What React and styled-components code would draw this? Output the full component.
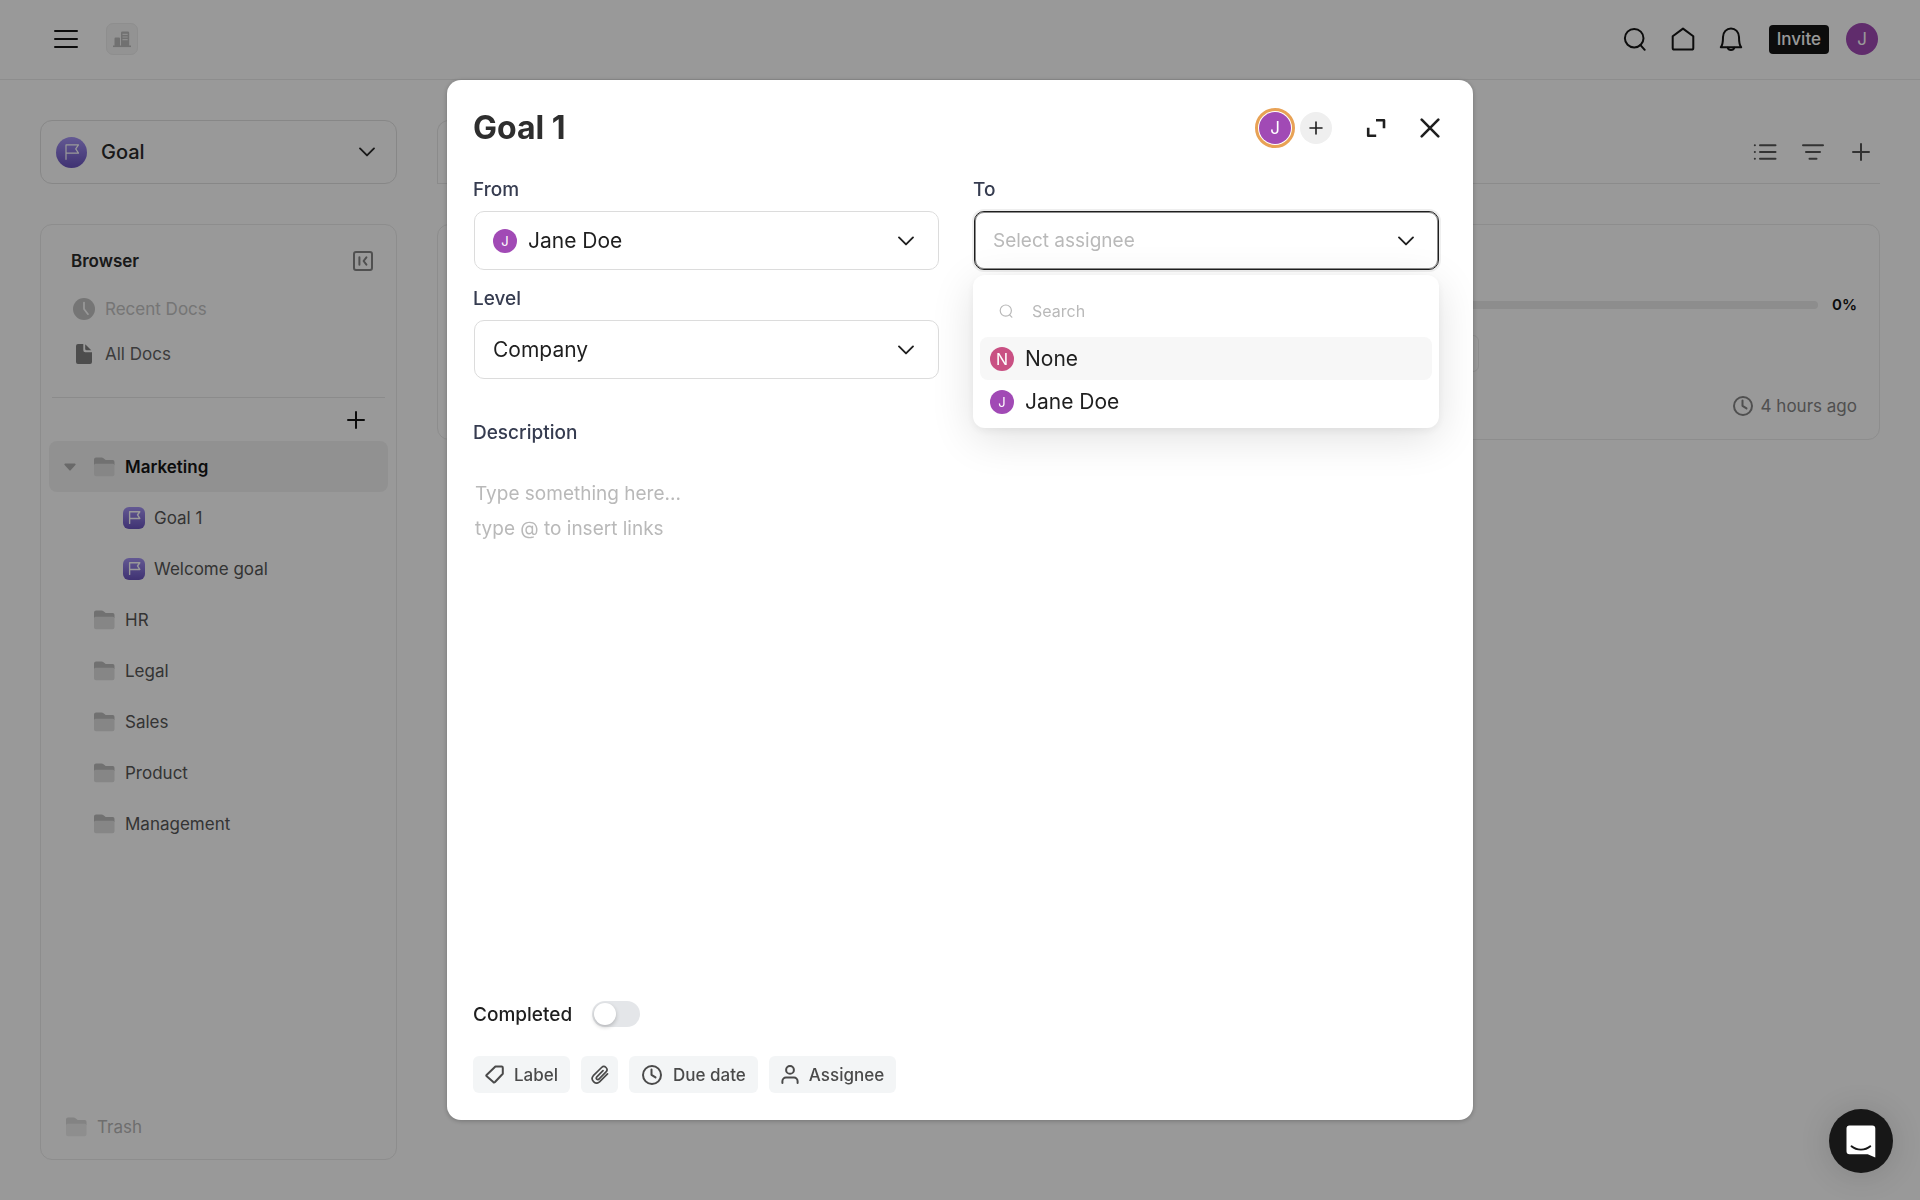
import React from "react";
import styled, { createGlobalStyle } from "styled-components";

const GlobalStyle = createGlobalStyle`
  *, *::before, *::after {
    box-sizing: border-box;
  }
  html, body, #root {
    height: 100%;
  }
  body {
    margin: 0;
    background: #fff;
    color: #1f1f1f;
    font-family: Inter, "Liberation Sans", sans-serif;
    font-size: 18px;
  }
  button, input, select, textarea {
    font: inherit;
    color: inherit;
    margin: 0;
  }
`;

/* ---------- icons ---------- */

const Icon = ({ w, h = w, stroke = 2, children }) => (
  <svg
    width={w}
    height={h}
    viewBox={`0 0 ${w} ${h}`}
    fill="none"
    stroke="currentColor"
    strokeWidth={stroke}
    strokeLinecap="round"
    strokeLinejoin="round"
    aria-hidden="true"
  >
    {children}
  </svg>
);

const ChevronIcon = () => (
  <Icon w={18} h={10} stroke={1.9}>
    <path d="M2 1.4l7 7 7-7" />
  </Icon>
);

const MenuIcon = () => (
  <Icon w={24} h={20}>
    <path d="M1 2h22M1 10h22M1 18h22" />
  </Icon>
);

const BuildingIcon = () => (
  <svg width="18" height="17" viewBox="0 0 18 17" aria-hidden="true">
    <g fill="#bdbdbd">
      <path d="M0 14.5h18v1.6H0z" />
      <path d="M1.5 7.5a1 1 0 0 1 1-1H6a1 1 0 0 1 1 1V15H1.5z" />
      <path d="M8 2A1.4 1.4 0 0 1 9.4.6h5.4A1.4 1.4 0 0 1 16.2 2v13H8z" />
    </g>
    <path
      d="M9.5 3.3h5.2M9.5 6h5.2M9.5 8.7h5.2"
      stroke="#ededed"
      strokeWidth="1.2"
    />
  </svg>
);

const SearchIcon = () => (
  <Icon w={24}>
    <circle cx="11.2" cy="11.2" r="9.3" />
    <path d="M17.3 17.9l4.4 4.9" />
  </Icon>
);

const SmallSearchIcon = () => (
  <Icon w={14} stroke={1.2}>
    <circle cx="6.8" cy="6.6" r="5.6" />
    <path d="M10.6 10.8l2.2 2.4" />
  </Icon>
);

const HomeIcon = () => (
  <Icon w={24}>
    <path d="M12 1.6L1.7 9.3V21a1.6 1.6 0 0 0 1.6 1.6h17.4a1.6 1.6 0 0 0 1.6-1.6V9.3z" />
  </Icon>
);

const BellIcon = () => (
  <Icon w={24}>
    <path d="M1.8 20.2c1.7-1.8 2.2-4 2.2-10.2a8 8.6 0 0 1 16 0c0 6.2.5 8.4 2.2 10.2z" />
    <path d="M8.7 20.8a3.4 2.8 0 0 0 6.6 0" />
  </Icon>
);

const PlusIcon = ({ size = 18, stroke = 2 }) => (
  <Icon w={size} stroke={stroke}>
    <path d={`M${size / 2} 1v${size - 2}M1 ${size / 2}h${size - 2}`} />
  </Icon>
);

const ListIcon = () => (
  <Icon w={24} h={18}>
    <path d="M1.8 2.3h.1M1.8 9h.1M1.8 15.7h.1M7 2.3h15.5M7 9h15.5M7 15.7h15.5" />
  </Icon>
);

const FilterIcon = () => (
  <Icon w={24} h={18}>
    <path d="M2 2.3h20M5 9h14M8.5 15.7h7" />
  </Icon>
);

const FlagIcon = ({ size = 16, stroke = 1.2 }) => (
  <svg
    width={size}
    height={size}
    viewBox="0 0 16 16"
    fill="none"
    stroke="#fff"
    strokeWidth={stroke}
    strokeLinejoin="round"
    strokeLinecap="round"
    aria-hidden="true"
  >
    <path d="M2 15.3V.9h12.5l-2.8 4 2.8 4.3H2" />
  </svg>
);

const CollapseIcon = () => (
  <Icon w={20}>
    <rect x="1" y="1" width="18" height="18" rx="2" />
    <path d="M6.4 6.3v7.4M13.4 6.3L10.6 10l2.8 3.7" />
  </Icon>
);

const ClockSolidIcon = () => (
  <svg width="22" height="22" viewBox="0 0 22 22" aria-hidden="true">
    <circle cx="11" cy="11" r="11" fill="currentColor" />
    <path
      d="M11 4.6V11l4 5.2"
      fill="none"
      stroke="#fff"
      strokeWidth="1.7"
      strokeLinecap="round"
    />
  </svg>
);

const ClockIcon = () => (
  <Icon w={22}>
    <circle cx="11" cy="11" r="9" />
    <path d="M10.5 5.5v5.3l4 2.6" />
  </Icon>
);

const DocIcon = () => (
  <svg width="22" height="22" viewBox="0 0 22 22" aria-hidden="true">
    <path
      d="M3 3a2 2 0 0 1 2-2h5.3v6.2a2 2 0 0 0 2 2H19V19a2 2 0 0 1-2 2H5a2 2 0 0 1-2-2z"
      fill="currentColor"
    />
    <path
      d="M12.2 1.3v4.5a1.5 1.5 0 0 0 1.5 1.5h4.6z"
      fill="currentColor"
    />
  </svg>
);

const FolderIcon = () => (
  <svg width="21" height="20" viewBox="0 0 21 20" aria-hidden="true">
    <path
      d="M0 2.5A2 2 0 0 1 2 .5h5.6a3 3 0 0 1 1.9.7l2.2 1.9h7A1.8 1.8 0 0 1 20.5 5v3H0z"
      fill="#bdbdbd"
    />
    <path
      d="M0 8.3a1.5 1.5 0 0 1 1.5-1.5H19a1.5 1.5 0 0 1 1.5 1.5v9a2 2 0 0 1-2 2H2a2 2 0 0 1-2-2z"
      fill="#dfdfdf"
    />
  </svg>
);

const CaretIcon = () => (
  <svg width="12" height="8" viewBox="0 0 12 8" aria-hidden="true">
    <path
      d="M1.3.5h9.4a.9.9 0 0 1 .7 1.5L6.9 7a1.2 1.2 0 0 1-1.8 0L.6 2A.9.9 0 0 1 1.3.5z"
      fill="#b0b0b0"
    />
  </svg>
);

const ExpandIcon = () => (
  <svg
    width="20"
    height="20"
    viewBox="0 0 20 20"
    fill="none"
    stroke="currentColor"
    strokeWidth="2.6"
    strokeLinejoin="round"
    aria-hidden="true"
  >
    <path d="M10 2.2h8v8M2.2 9.8v8h8" />
  </svg>
);

const CloseIcon = () => (
  <Icon w={20} stroke={2.6}>
    <path d="M1.7 1.7l16.6 16.6M18.3 1.7L1.7 18.3" />
  </Icon>
);

const TagIcon = () => (
  <Icon w={19}>
    <path d="M10.4 1.6h6.2a1.2 1.2 0 0 1 1.2 1.2v5.9L10 17a1.3 1.3 0 0 1-1.7.1L1.7 11.3a1 1 0 0 1-.1-1.4z" />
  </Icon>
);

const ClipIcon = () => (
  <Icon w={19} stroke={1.7}>
    <path d="M13 5.7l-6.4 6.5a1.5 1.5 0 0 0 2.1 2.1l7.3-7.4a3.1 3.1 0 0 0-4.4-4.4L3.3 10.7a4.4 4.4 0 0 0 6.2 6.2l8-8" />
  </Icon>
);

const PersonIcon = () => (
  <Icon w={18} h={19}>
    <circle cx="9" cy="4.9" r="3.9" />
    <path d="M1.4 18v-1.8a3.6 3.6 0 0 1 3.6-3.6h8a3.6 3.6 0 0 1 3.6 3.6V18" />
  </Icon>
);

const ChatIcon = () => (
  <svg width="30" height="33" viewBox="0 0 30 33" aria-hidden="true">
    <path
      d="M3.5.5h22.8a3 3 0 0 1 3 3v29l-7.6-3.3H3.5a3 3 0 0 1-3-3V3.5a3 3 0 0 1 3-3z"
      fill="#fff"
    />
    <path
      d="M5.5 21.3c5.2 4.4 13.6 4.4 18.8 0"
      fill="none"
      stroke="#171717"
      strokeWidth="1.9"
      strokeLinecap="round"
    />
  </svg>
);

/* ---------- shared parts ---------- */

const IconButton = styled.button`
  display: flex;
  align-items: center;
  justify-content: center;
  width: ${(p) => p.$size || 24}px;
  height: ${(p) => p.$size || 24}px;
  padding: 0;
  border: 0;
  background: none;
  cursor: pointer;
`;

const Avatar = styled.span`
  display: flex;
  flex: none;
  align-items: center;
  justify-content: center;
  width: ${(p) => p.$size}px;
  height: ${(p) => p.$size}px;
  border-radius: 50%;
  background: ${(p) => p.$color || "#a14ab5"};
  color: #fff;
  font-size: ${(p) => p.$font}px;
`;

const GoalBadge = styled.span`
  display: flex;
  flex: none;
  align-items: center;
  justify-content: center;
  width: ${(p) => p.$size}px;
  height: ${(p) => p.$size}px;
  border-radius: ${(p) => p.$radius};
  background: linear-gradient(#a594f5, #6a54bf);
`;

const SelectBox = styled.div`
  display: flex;
  align-items: center;
  position: relative;
`;

// the native arrow is hidden, so the chevron sits over the select's right end
const SelectInput = styled.select`
  flex: 1;
  min-width: 0;
  height: 100%;
  border: 0;
  outline: 0;
  background: none;
  appearance: none;
  cursor: pointer;
`;

const Arrow = styled.span`
  display: flex;
  position: absolute;
  right: ${(p) => p.$right}px;
  pointer-events: none;
`;

/* ---------- page ---------- */

const Page = styled.div`
  display: flex;
  flex-direction: column;
  min-height: 100vh;
`;

const Header = styled.header`
  display: flex;
  align-items: center;
  justify-content: space-between;
  height: 80px;
  padding: 0 42px 1px 54px;
  border-bottom: 1px solid #ebebeb;
`;

const HeaderGroup = styled.div`
  display: flex;
  align-items: center;
  gap: ${(p) => p.$gap}px;
  color: #151515;
`;

const OrgButton = styled.button`
  display: flex;
  align-items: center;
  justify-content: center;
  width: 32px;
  height: 32px;
  padding: 0;
  border: 1px solid #ededed;
  border-radius: 7px;
  background: #f5f5f5;
`;

const InviteButton = styled.button`
  height: 29px;
  margin-left: 2px;
  padding: 0 8px;
  border: 0;
  border-radius: 4px;
  background: #151515;
  color: #fff;
  font-size: 17px;
  font-weight: 500;
  line-height: 29px;
`;

const HeaderAvatar = styled.button`
  margin-left: -7px;
  padding: 0;
  border: 0;
  background: none;
`;

const Body = styled.div`
  display: flex;
  flex: 1;
  gap: 40px;
  padding: 40px;
`;

const Sidebar = styled.aside`
  display: flex;
  flex: none;
  flex-direction: column;
  gap: 40px;
  width: 357px;
`;

const TypePicker = styled(SelectBox)`
  height: 64px;
  padding-left: 15px;
  gap: 14px;
  border: 1px solid #e2e2e2;
  border-radius: 12px;
  color: #2a2a2a;
  font-size: 20px;
  font-weight: 500;
`;

const Panel = styled.section`
  display: flex;
  flex: 1;
  flex-direction: column;
  padding: 0 8px 12px;
  border: 1px solid #ebebeb;
  border-radius: 12px;
`;

const PanelHead = styled.div`
  display: flex;
  align-items: center;
  justify-content: space-between;
  height: 61px;
  padding: 11px 15px 0 22px;
  color: #868686;

  h2 {
    margin: 0;
    color: #2a2a2a;
    font-size: 17px;
    font-weight: 600;
  }
`;

const DocLink = styled.a`
  display: flex;
  align-items: center;
  height: 45px;
  padding-left: 24px;
  gap: 10px;
  color: ${(p) => (p.$muted ? "#c4c4c4" : "#646464")};
  font-size: 17px;
  text-decoration: none;

  svg {
    color: ${(p) => (p.$muted ? "#c4c4c4" : "#808080")};
  }
`;

const Divider = styled.hr`
  align-self: stretch;
  height: 1px;
  margin: 21px 3px 0;
  border: 0;
  background: #e8e8e8;
`;

const AddRow = styled.div`
  display: flex;
  justify-content: flex-end;
  padding: 10px 20px 9px;
  color: #151515;
`;

const Tree = styled.ul`
  display: flex;
  flex-direction: column;
  margin: 0;
  padding: 0;
  list-style: none;
`;

const TreeItem = styled.a`
  display: flex;
  align-items: center;
  height: 51px;
  padding-left: ${(p) => (p.$nested ? 74 : 15)}px;
  gap: ${(p) => (p.$nested ? 9 : 10)}px;
  border-radius: 8px;
  background: ${(p) => (p.$active ? "#f2f2f2" : "none")};
  color: ${(p) => (p.$active ? "#151515" : "#575757")};
  font-size: 17px;
  font-weight: ${(p) => (p.$active ? 600 : 400)};
  text-decoration: none;
`;

const CaretSlot = styled.span`
  display: flex;
  width: 20px;
`;

const TrashLink = styled.a`
  display: flex;
  align-items: center;
  height: 40px;
  margin-top: auto;
  padding-left: 17px;
  gap: 10px;
  color: #7d7d7d;
  font-size: 17px;
  text-decoration: none;
  opacity: 0.55;
`;

const Main = styled.main`
  flex: 1;
  min-width: 0;
`;

const TabBar = styled.div`
  display: flex;
  align-items: center;
  justify-content: space-between;
  height: 64px;
  padding-right: 7px;
  border-bottom: 1px solid #e8e8e8;
`;

const Tab = styled.div`
  align-self: stretch;
  width: 200px;
  border: 1px solid #e8e8e8;
  border-bottom: 0;
  border-radius: 12px 12px 0 0;
`;

const Tools = styled.div`
  display: flex;
  gap: 24px;
  color: #555;
`;

const GoalCard = styled.article`
  display: flex;
  flex-direction: column;
  height: 216px;
  margin-top: 40px;
  padding: 70px 22px 22px;
  border: 1px solid #ebebeb;
  border-radius: 12px;
`;

const ProgressRow = styled.div`
  display: flex;
  align-items: center;
  gap: 14px;
  font-size: 15px;
  font-weight: 600;
  line-height: 20px;
  color: #151515;
`;

const Track = styled.div`
  flex: 1;
  height: 8px;
  border-radius: 4px;
  background: #ebebeb;
`;

const Chip = styled.div`
  width: 1019px;
  height: 37px;
  margin-top: 20px;
  border: 1px solid #ebebeb;
  border-radius: 6px;
`;

const Updated = styled.div`
  display: flex;
  align-items: center;
  justify-content: flex-end;
  margin-top: auto;
  gap: 7px;
  color: #858585;
  font-size: 17px;
`;

/* ---------- modal ---------- */

const Overlay = styled.div`
  position: fixed;
  inset: 0;
  display: flex;
  align-items: center;
  justify-content: center;
  padding: 80px 0;
  background: rgba(0, 0, 0, 0.4);
`;

const Modal = styled.div`
  display: flex;
  flex-direction: column;
  width: 1026px;
  max-width: 100%;
  height: 100%;
  padding: 28px 34px 27px 26px;
  border-radius: 14px;
  background: #fff;
  box-shadow: 0 1px 5px rgba(0, 0, 0, 0.25);
`;

const ModalHead = styled.div`
  display: flex;
  align-items: center;
  justify-content: space-between;
  height: 40px;
  margin-bottom: 30px;

  h1 {
    margin: 0;
    color: #2e2e2e;
    font-size: 32px;
    font-weight: 700;
    line-height: 40px;
  }
`;

const ModalActions = styled.div`
  display: flex;
  align-items: center;
`;

const Ring = styled.span`
  padding: 1px;
  border: 3px solid #e8a255;
  border-radius: 50%;
`;

const AddPerson = styled(IconButton)`
  margin: 0 34px 0 5px;
  border-radius: 50%;
  background: #efefef;
`;

const CloseButton = styled(IconButton)`
  margin: 0 -1px 0 34px;
`;

const Fields = styled.div`
  display: grid;
  grid-template-columns: 1fr 1fr;
  gap: 17px 34px;
`;

const FieldGroup = styled.div`
  position: relative;
  display: flex;
  flex-direction: column;
  gap: 9px;
`;

const FieldLabel = styled.label`
  color: #363c50;
  font-size: 19px;
  font-weight: 500;
  line-height: 24px;
`;

const FieldBox = styled(SelectBox)`
  height: 59px;
  margin-left: 1px;
  padding-left: 18px;
  gap: 11px;
  border: 1px solid ${(p) => (p.$focused ? "#1f1f1f" : "#dcdcdc")};
  border-radius: 10px;
  box-shadow: ${(p) =>
    p.$focused ? "0 0 0 2px #efefef, inset 0 0 0 1px #8c8c8c" : "none"};
  color: ${(p) => (p.$empty ? "#b9b9b9" : "#1f1f1f")};
  font-size: ${(p) => (p.$empty ? 19 : 21)}px;

  svg {
    color: #1f1f1f;
  }
`;

const Menu = styled.div`
  position: absolute;
  z-index: 1;
  top: calc(100% + 5px);
  left: 0;
  right: 0;
  padding: 11px 7px 5px;
  border-radius: 12px;
  background: #fff;
  box-shadow: 0 10px 44px rgba(0, 0, 0, 0.12), 0 3px 10px rgba(0, 0, 0, 0.06);
`;

const MenuSearch = styled.label`
  display: flex;
  align-items: center;
  height: 49px;
  margin-bottom: 2px;
  padding: 0 19px;
  gap: 19px;
  color: #b9b9b9;
  font-size: 16px;

  input {
    flex: 1;
    padding: 0;
    border: 0;
    outline: 0;
    background: none;
  }
  input::placeholder {
    color: #b9b9b9;
    opacity: 1;
  }
`;

const MenuOption = styled.button`
  display: flex;
  align-items: center;
  width: 100%;
  height: 43px;
  padding: 0 10px;
  gap: 11px;
  border: 0;
  border-radius: 8px;
  background: ${(p) => (p.$active ? "#f7f7f7" : "none")};
  color: #1f1f1f;
  font-size: 21px;
  text-align: left;
`;

const Description = styled.div`
  display: flex;
  flex: 1;
  flex-direction: column;
  gap: 31px;
  margin-top: 42px;
`;

const DescriptionInput = styled.textarea`
  flex: 1;
  padding: 0 2px;
  border: 0;
  outline: 0;
  resize: none;
  background: none;
  font-size: 19px;
  line-height: 35px;

  &::placeholder {
    color: #b9b9b9;
    opacity: 1;
  }
`;

const CompletedRow = styled.label`
  display: flex;
  align-items: center;
  align-self: flex-start;
  height: 26px;
  gap: 20px;
  font-size: 19px;
  font-weight: 500;
`;

const Switch = styled.input`
  appearance: none;
  display: flex;
  align-items: center;
  width: 48px;
  height: 26px;
  padding: 0 2px;
  border-radius: 13px;
  background: #e4e6e9;

  &::before {
    content: "";
    width: 22px;
    height: 22px;
    border-radius: 50%;
    background: #fff;
    box-shadow: 0 2px 4px rgba(0, 0, 0, 0.22);
  }
  &:checked {
    justify-content: flex-end;
    background: #6a54bf;
  }
`;

const Attributes = styled.div`
  display: flex;
  gap: 11px;
  margin-top: 29px;
`;

const AttributeButton = styled.button`
  display: flex;
  align-items: center;
  justify-content: center;
  height: 37px;
  padding: 0 ${(p) => (p.$bare ? 9 : 12)}px;
  gap: 10px;
  border: 0;
  border-radius: 6px;
  background: #f3f5f6;
  color: #4a4a4a;
  font-size: 17px;
  font-weight: 500;
`;

// stays above the overlay
const ChatButton = styled.button`
  position: fixed;
  right: 27px;
  bottom: 27px;
  z-index: 2;
  display: flex;
  align-items: center;
  justify-content: center;
  width: 64px;
  height: 64px;
  padding: 0;
  border: 0;
  border-radius: 50%;
  background: #171717;
  box-shadow: 0 2px 32px rgba(0, 0, 0, 0.14);
`;

const FOLDERS = ["HR", "Legal", "Sales", "Product", "Management"];
const GOALS = ["Goal 1", "Welcome goal"];

const TopBar = () => (
  <Header>
    <HeaderGroup $gap={28}>
      <IconButton aria-label="Menu">
        <MenuIcon />
      </IconButton>
      <OrgButton aria-label="Organization">
        <BuildingIcon />
      </OrgButton>
    </HeaderGroup>
    <HeaderGroup $gap={24}>
      <IconButton aria-label="Search">
        <SearchIcon />
      </IconButton>
      <IconButton aria-label="Home">
        <HomeIcon />
      </IconButton>
      <IconButton aria-label="Notifications">
        <BellIcon />
      </IconButton>
      <InviteButton>Invite</InviteButton>
      <HeaderAvatar aria-label="Account">
        <Avatar $size={32} $font={17}>
          J
        </Avatar>
      </HeaderAvatar>
    </HeaderGroup>
  </Header>
);

const Browser = () => (
  <Sidebar>
    <TypePicker>
      <GoalBadge $size={31} $radius="50%">
        <FlagIcon />
      </GoalBadge>
      <SelectInput aria-label="Document type" defaultValue="Goal">
        <option>Goal</option>
      </SelectInput>
      <Arrow $right={20}>
        <ChevronIcon />
      </Arrow>
    </TypePicker>
    <Panel>
      <PanelHead>
        <h2>Browser</h2>
        <IconButton $size={20} aria-label="Collapse">
          <CollapseIcon />
        </IconButton>
      </PanelHead>
      <DocLink href="#recent" $muted>
        <ClockSolidIcon />
        Recent Docs
      </DocLink>
      <DocLink href="#all">
        <DocIcon />
        All Docs
      </DocLink>
      <Divider />
      <AddRow>
        <IconButton aria-label="Add folder">
          <PlusIcon />
        </IconButton>
      </AddRow>
      <Tree>
        <li>
          <TreeItem href="#marketing" $active>
            <CaretSlot>
              <CaretIcon />
            </CaretSlot>
            <FolderIcon />
            Marketing
          </TreeItem>
        </li>
        {GOALS.map((name) => (
          <li key={name}>
            <TreeItem href="#goal" $nested>
              <GoalBadge $size={22} $radius="6px">
                <FlagIcon size={13} stroke={1.7} />
              </GoalBadge>
              {name}
            </TreeItem>
          </li>
        ))}
        {FOLDERS.map((name) => (
          <li key={name}>
            <TreeItem href="#folder">
              <CaretSlot />
              <FolderIcon />
              {name}
            </TreeItem>
          </li>
        ))}
      </Tree>
      <TrashLink href="#trash">
        <FolderIcon />
        Trash
      </TrashLink>
    </Panel>
  </Sidebar>
);

const Goals = () => (
  <Main>
    <TabBar>
      <Tab />
      <Tools>
        <IconButton aria-label="List view">
          <ListIcon />
        </IconButton>
        <IconButton aria-label="Filter">
          <FilterIcon />
        </IconButton>
        <IconButton aria-label="Add goal">
          <PlusIcon />
        </IconButton>
      </Tools>
    </TabBar>
    <GoalCard>
      <ProgressRow>
        <Track />
        0%
      </ProgressRow>
      <Chip />
      <Updated>
        <ClockIcon />
        4 hours ago
      </Updated>
    </GoalCard>
  </Main>
);

const GoalModal = () => (
  <Overlay>
    <Modal role="dialog" aria-labelledby="goal-title">
      <ModalHead>
        <h1 id="goal-title">Goal 1</h1>
        <ModalActions>
          <Ring>
            <Avatar $size={32} $font={17}>
              J
            </Avatar>
          </Ring>
          <AddPerson $size={32} aria-label="Add person">
            <PlusIcon size={14} stroke={1.6} />
          </AddPerson>
          <IconButton $size={20} aria-label="Expand">
            <ExpandIcon />
          </IconButton>
          <CloseButton $size={20} aria-label="Close">
            <CloseIcon />
          </CloseButton>
        </ModalActions>
      </ModalHead>

      <Fields>
        <FieldGroup>
          <FieldLabel htmlFor="from">From</FieldLabel>
          <FieldBox>
            <Avatar $size={24} $font={13}>
              J
            </Avatar>
            <SelectInput id="from" defaultValue="Jane Doe">
              <option>Jane Doe</option>
            </SelectInput>
            <Arrow $right={23}>
              <ChevronIcon />
            </Arrow>
          </FieldBox>
        </FieldGroup>

        <FieldGroup>
          <FieldLabel htmlFor="to">To</FieldLabel>
          <FieldBox $focused $empty>
            <SelectInput id="to" defaultValue="">
              <option value="">Select assignee</option>
            </SelectInput>
            <Arrow $right={23}>
              <ChevronIcon />
            </Arrow>
          </FieldBox>
          <Menu>
            <MenuSearch>
              <SmallSearchIcon />
              <input type="text" placeholder="Search" aria-label="Search" />
            </MenuSearch>
            <MenuOption $active>
              <Avatar $size={24} $font={16} $color="#c95083">
                N
              </Avatar>
              None
            </MenuOption>
            <MenuOption>
              <Avatar $size={24} $font={13}>
                J
              </Avatar>
              Jane Doe
            </MenuOption>
          </Menu>
        </FieldGroup>

        <FieldGroup>
          <FieldLabel htmlFor="level">Level</FieldLabel>
          <FieldBox>
            <SelectInput id="level" defaultValue="Company">
              <option>Company</option>
            </SelectInput>
            <Arrow $right={23}>
              <ChevronIcon />
            </Arrow>
          </FieldBox>
        </FieldGroup>
      </Fields>

      <Description>
        <FieldLabel htmlFor="description">Description</FieldLabel>
        <DescriptionInput
          id="description"
          placeholder={"Type something here...\ntype @ to insert links"}
        />
      </Description>

      <CompletedRow>
        Completed
        <Switch type="checkbox" />
      </CompletedRow>

      <Attributes>
        <AttributeButton>
          <TagIcon />
          Label
        </AttributeButton>
        <AttributeButton $bare aria-label="Attach file">
          <ClipIcon />
        </AttributeButton>
        <AttributeButton>
          <ClockIcon />
          Due date
        </AttributeButton>
        <AttributeButton>
          <PersonIcon />
          Assignee
        </AttributeButton>
      </Attributes>
    </Modal>
  </Overlay>
);

const App = () => (
  <>
    <GlobalStyle />
    <Page>
      <TopBar />
      <Body>
        <Browser />
        <Goals />
      </Body>
    </Page>
    <GoalModal />
    <ChatButton aria-label="Open chat">
      <ChatIcon />
    </ChatButton>
  </>
);

export default App;
